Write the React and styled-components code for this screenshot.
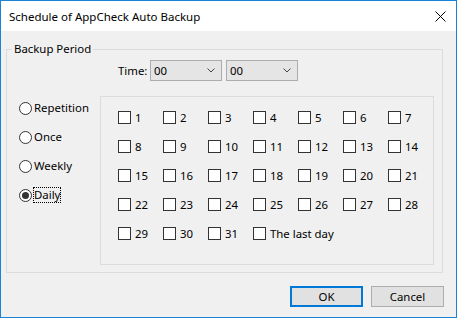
import React from 'react';
import styled, { createGlobalStyle } from 'styled-components';

const GlobalStyle = createGlobalStyle`
  html, body {
    margin: 0;
    padding: 0;
    background: #f0f0f0;
  }
  body {
    font-family: 'Segoe UI', 'Noto Sans', sans-serif;
    font-size: 11.4px;
    color: #000;
  }
`;

const Window = styled.div`
  width: 457px;
  height: 318px;
  box-sizing: border-box;
  border: 1px solid #1883d7;
  background: #f0f0f0;
  display: flex;
  flex-direction: column;
`;

const TitleBar = styled.div`
  height: 30px;
  flex-shrink: 0;
  background: #fff;
  display: flex;
  align-items: center;
  justify-content: space-between;
  padding: 0 10px 0 8px;
`;

const Title = styled.span`
  font-size: 11.5px;
`;

const Group = styled.fieldset`
  margin: 10px 13px 0 5px;
  padding: 0 0 7px;
  border: 1px solid #dcdcdc;
  min-width: 0;
`;

const Legend = styled.legend`
  margin-left: 5px;
  padding: 0 2px;
  line-height: 16px;
`;

const TimeRow = styled.div`
  display: flex;
  align-items: center;
  padding: 3px 0 0 111px;
`;

const TimeLabel = styled.span`
  width: 32px;
  box-sizing: border-box;
  padding-right: 7px;
  text-align: right;
`;

const Combo = styled.div`
  width: 72px;
  height: 21px;
  box-sizing: border-box;
  margin-right: 4px;
  border: 1px solid #adadad;
  background: #e5e5e5;
  display: flex;
  align-items: center;
  justify-content: space-between;
  padding: 0 6px 0 3px;
`;

const MainRow = styled.div`
  display: flex;
  margin-top: 15px;
`;

const RadioCol = styled.div`
  width: 93px;
  flex-shrink: 0;
  box-sizing: border-box;
  padding: 4px 0 0 12px;
  display: flex;
  flex-direction: column;
  gap: 13px;
`;

const RadioItem = styled.label`
  display: flex;
  align-items: center;
  height: 16px;
  gap: 2px;
  white-space: nowrap;
`;

const RadioCircle = styled.span`
  width: 13px;
  height: 13px;
  box-sizing: border-box;
  border-radius: 50%;
  border: 1px solid #333;
  background: #fff;
  display: flex;
  align-items: center;
  justify-content: center;
  &::after {
    content: '';
    width: 7px;
    height: 7px;
    border-radius: 50%;
    background: ${p => (p.$checked ? '#333' : 'transparent')};
  }
`;

const RadioText = styled.span`
  line-height: 14px;
  outline: ${p => (p.$focused ? '1px dotted #000' : 'none')};
`;

const Panel = styled.div`
  flex: 1;
  margin-right: 9px;
  border: 1px solid #dcdcdc;
  padding: 14px 0 24px 17px;
  display: grid;
  grid-template-columns: repeat(7, 45px);
  row-gap: 16px;
  align-content: start;
`;

const CheckItem = styled.label`
  display: flex;
  align-items: center;
  gap: 4px;
  height: 13px;
  white-space: nowrap;
`;

const CheckBox = styled.span`
  width: 13px;
  height: 13px;
  box-sizing: border-box;
  border: 1px solid #333;
  background: #fff;
  flex-shrink: 0;
`;

const Footer = styled.div`
  display: flex;
  justify-content: flex-end;
  gap: 8px;
  padding: 13px 12px 0 0;
`;

const Button = styled.button`
  width: 73px;
  height: 21px;
  box-sizing: border-box;
  padding: 0;
  font: inherit;
  color: #000;
  background: #e1e1e1;
  border: ${p => (p.$primary ? '2px solid #0078d7' : '1px solid #adadad')};
`;

const days = Array.from({ length: 31 }, (_, i) => String(i + 1));

const Chevron = () => (
  <svg width="8" height="5" viewBox="0 0 8 5">
    <path d="M0.5 0.5 L4 4 L7.5 0.5" fill="none" stroke="#444" strokeWidth="1" />
  </svg>
);

export default function App() {
  const periods = ['Repetition', 'Once', 'Weekly', 'Daily'];
  return (
    <Window>
      <GlobalStyle />
      <TitleBar>
        <Title>Schedule of AppCheck Auto Backup</Title>
        <svg width="11" height="11" viewBox="0 0 11 11">
          <path d="M0.5 0.5 L10.5 10.5 M10.5 0.5 L0.5 10.5" stroke="#000" strokeWidth="1" />
        </svg>
      </TitleBar>
      <Group>
        <Legend>Backup Period</Legend>
        <TimeRow>
          <TimeLabel>Time:</TimeLabel>
          <Combo>
            <span>00</span>
            <Chevron />
          </Combo>
          <Combo>
            <span>00</span>
            <Chevron />
          </Combo>
        </TimeRow>
        <MainRow>
          <RadioCol>
            {periods.map(p => (
              <RadioItem key={p}>
                <RadioCircle $checked={p === 'Daily'} />
                <RadioText $focused={p === 'Daily'}>{p}</RadioText>
              </RadioItem>
            ))}
          </RadioCol>
          <Panel>
            {[...days, 'The last day'].map(d => (
              <CheckItem key={d}>
                <CheckBox />
                <span>{d}</span>
              </CheckItem>
            ))}
          </Panel>
        </MainRow>
      </Group>
      <Footer>
        <Button $primary>OK</Button>
        <Button>Cancel</Button>
      </Footer>
    </Window>
  );
}
